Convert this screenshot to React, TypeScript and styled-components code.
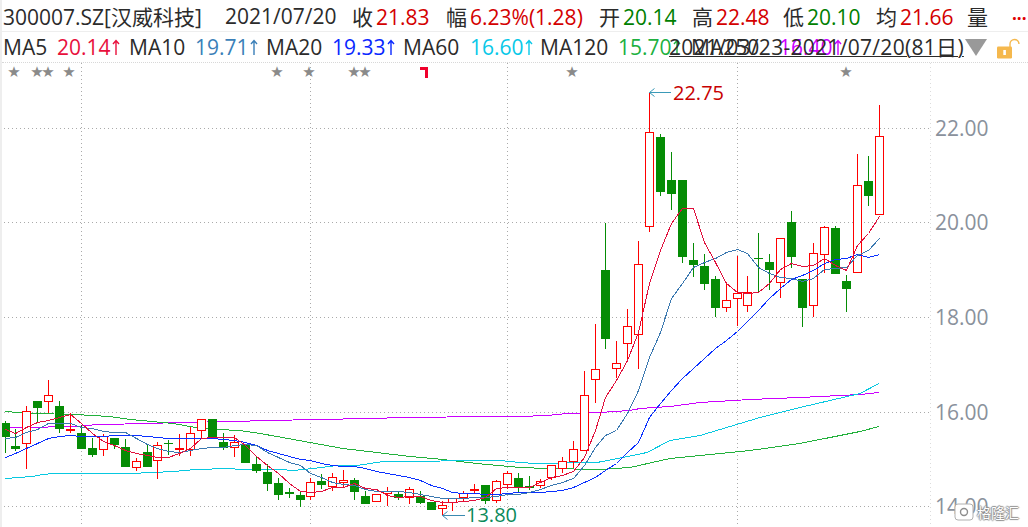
import React from "react";
import styled, { createGlobalStyle } from "styled-components";

const GlobalStyle = createGlobalStyle`
  html, body {
    margin: 0;
    padding: 0;
    background: #fff;
  }
`;

const Page = styled.div`
  position: relative;
  width: 1028px;
  height: 527px;
  overflow: hidden;
  background: #fff;
  font-family: "Open Sans", "Noto Sans CJK SC", sans-serif;
  color: #2b2b2b;
  border-left: 2px solid #eeeeee;
  box-sizing: border-box;
`;

const QuoteRow = styled.div`
  position: relative;
  display: flex;
  align-items: center;
  height: 32px;
  padding-left: 1px;
  border-bottom: 1px solid #eeeeee;
  font-size: 21px;
  white-space: nowrap;
  box-sizing: border-box;
`;

const MaRow = styled.div`
  position: relative;
  display: flex;
  align-items: center;
  height: 31px;
  padding-left: 1px;
  font-size: 21px;
  white-space: nowrap;
  border-bottom: 1px dotted #d8d8d8;
  box-sizing: border-box;
`;

const Cell = styled.span<{ $width: number }>`
  display: inline-block;
  flex: none;
  width: ${(p) => p.$width}px;
`;

const Value = styled.span<{ $color: string }>`
  color: ${(p) => p.$color};
  margin-left: 3px;
`;

const MaValue = styled(Cell)<{ $color: string }>`
  display: inline-flex;
  align-items: center;
  gap: 1px;
  color: ${(p) => p.$color};
`;

const ArrowIcon = styled.svg`
  display: block;
  flex: none;
`;

const RangeLink = styled.span`
  position: absolute;
  left: 667px;
  top: -1px;
  letter-spacing: 0.3px;
  text-decoration: underline;
  text-decoration-thickness: 1px;
`;

const Dots = styled.span`
  position: absolute;
  left: 1010px;
  top: 2px;
  color: #e00000;
  font-size: 17px;
  font-weight: 700;
`;

const SortArrow = styled.span`
  position: absolute;
  left: 963px;
  top: 7px;
  width: 0;
  height: 0;
  border-left: 11px solid transparent;
  border-right: 11px solid transparent;
  border-top: 17px solid #999999;
`;

const LockIcon = styled.svg`
  position: absolute;
  left: 994px;
  top: 6px;
`;

const ChartCanvas = styled.svg`
  display: block;
  width: 1026px;
  height: 464px;
`;

const AxisText = styled.text`
  font-family: "Open Sans", sans-serif;
  font-size: 21px;
  fill: #8a919c;
`;

const StarText = styled.text`
  font-family: "DejaVu Sans", sans-serif;
  font-size: 15px;
  fill: #8a8a8a;
`;

const PeakText = styled.text<{ $color: string }>`
  font-family: "Open Sans", sans-serif;
  font-size: 20px;
  fill: ${(p) => p.$color};
`;

const Watermark = styled.div`
  position: absolute;
  right: 9px;
  bottom: 6px;
  display: flex;
  align-items: center;
  gap: 3px;
  color: #fff;
  font-family: "Noto Sans CJK SC", sans-serif;
  font-size: 14px;
  line-height: 18px;
  text-shadow: 1px 0 1px #8d8d8d, -1px 0 1px #8d8d8d, 0 1px 1px #8d8d8d, 0 -1px 1px #8d8d8d;
`;

const WatermarkLogo = styled.svg`
  display: block;
`;

const RED = "#ff0000";
const GREEN = "#058c05";

const CHART_TOP = 63;

// [bodyTop, bodyBottom, wickTop, wickBottom, up]
const candles: [number, number, number, number, number][] = [
  [423, 437, 421, 453, 0], [446, 449, 429, 451, 0], [411, 444, 406, 469, 1], [401, 408, 401, 422, 0],
  [395, 402, 380, 413, 1], [406, 429, 401, 433, 0], [429, 431, 413, 433, 1], [433, 449, 425, 449, 0],
  [448, 455, 438, 457, 0], [436, 450, 434, 456, 1], [438, 445, 438, 449, 0], [447, 467, 439, 467, 0],
  [461, 468, 458, 471, 1], [452, 467, 445, 467, 0], [445, 461, 442, 479, 1], [443, 444, 440, 455, 0],
  [448, 449, 434, 456, 1], [433, 450, 427, 456, 1], [419, 431, 419, 438, 1], [419, 437, 419, 438, 0],
  [442, 448, 433, 450, 0], [442, 448, 435, 457, 1], [445, 463, 445, 463, 0], [464, 471, 457, 473, 0],
  [472, 484, 464, 491, 0], [483, 495, 478, 500, 0], [492, 494, 488, 498, 0], [495, 500, 492, 507, 0],
  [482, 497, 478, 500, 1], [481, 485, 474, 489, 0], [477, 487, 473, 491, 1], [480, 483, 470, 487, 1],
  [480, 492, 478, 500, 0], [496, 504, 491, 504, 0], [494, 502, 494, 502, 1], [491, 494, 487, 506, 1],
  [494, 498, 492, 500, 0], [489, 498, 487, 504, 1], [496, 503, 491, 504, 0], [502, 510, 502, 510, 0],
  [505, 509, 501, 515, 1], [498, 503, 498, 511, 1], [493, 498, 491, 502, 1], [489, 490, 484, 494, 1],
  [485, 501, 485, 504, 0], [481, 501, 480, 503, 1], [473, 485, 471, 489, 1], [478, 488, 473, 492, 0],
  [486, 488, 476, 490, 0], [481, 486, 479, 488, 1], [465, 478, 465, 480, 1], [461, 469, 457, 473, 1],
  [449, 462, 441, 468, 1], [395, 451, 371, 451, 1], [369, 380, 324, 403, 1], [270, 339, 223, 349, 0],
  [363, 369, 341, 378, 1], [326, 344, 309, 360, 1], [264, 335, 241, 369, 1], [132, 227, 93, 232, 1],
  [137, 192, 134, 196, 0], [180, 194, 152, 210, 0], [180, 257, 180, 263, 0], [260, 265, 243, 277, 0],
  [266, 284, 254, 290, 0], [279, 308, 276, 317, 0], [300, 308, 283, 312, 1], [293, 299, 256, 326, 1],
  [292, 306, 276, 312, 1], [258, 259, 233, 292, 0], [262, 270, 254, 290, 0], [238, 283, 238, 298, 1],
  [222, 257, 211, 268, 0], [279, 308, 279, 327, 0], [253, 306, 243, 317, 1], [227, 255, 226, 273, 1],
  [228, 274, 226, 274, 0], [281, 289, 275, 312, 0], [185, 273, 154, 273, 1], [181, 196, 156, 206, 0],
  [136, 215, 105, 215, 1],
];

const candleX = (i: number) => Math.floor(5.01 + 10.926 * i);

const ma5 = [
  429, 433, 427, 422, 420, 417, 414, 423, 433, 441, 445, 450, 453, 455, 457, 457, 453, 448, 438, 437, 437, 437, 445, 456,
  465, 473, 483, 491, 492, 491, 487, 487, 483, 488, 489, 495, 497, 496, 496, 500, 502, 502, 501, 500, 497, 488, 487, 487,
  487, 482, 477, 475, 471, 457, 430, 397, 380, 360, 332, 283, 250, 223, 208, 208, 242, 262, 283, 292, 293, 292, 283, 269,
  263, 266, 265, 258, 265, 270, 245, 233, 216,
];
const ma10 = [
  438, 437, 432, 429, 423, 423, 423, 427, 428, 431, 432, 432, 438, 444, 448, 451, 452, 450, 448, 447, 447, 445, 444, 445,
  452, 457, 462, 465, 473, 477, 482, 484, 485, 489, 491, 491, 491, 492, 494, 496, 498, 498, 498, 497, 497, 496, 494, 494,
  492, 489, 485, 482, 478, 465, 447, 435, 430, 413, 390, 357, 332, 298, 283, 267, 262, 258, 252, 249, 253, 267, 273, 277,
  278, 281, 278, 269, 268, 267, 255, 250, 238,
];
const ma20 = [
  457, 453, 448, 443, 438, 436, 435, 436, 436, 436, 435, 435, 435, 436, 437, 438, 438, 438, 438, 438, 439, 440, 442, 445,
  450, 453, 456, 459, 460, 463, 465, 466, 466, 468, 471, 473, 475, 477, 480, 485, 488, 492, 493, 493, 494, 494, 493, 492,
  492, 492, 491, 490, 487, 482, 477, 470, 463, 452, 442, 417, 403, 390, 378, 368, 358, 348, 340, 331, 321, 310, 298, 288,
  279, 275, 270, 263, 259, 258, 254, 257, 254,
];

const ma60Pts = "5,478 32,476 43,474 54,473 120,473 131,473 152,472 174,471 196,469 229,468 240,469 260,469 280,469 293,470 313,468 337,465 357,465 383,461 500,460 520,462 535,463 597,462 623,457 647,452 670,440 700,435 760,417 800,407 860,393 879,383";
const ma120Pts = "5,411 32,413 76,414 109,416 131,419 152,421 173,423 196,427 218,429 240,430 260,433 277,436 310,442 343,448 377,452 410,456 443,459 477,463 520,467 547,468 600,469 630,467 670,458 700,455 750,450 800,443 860,431 879,426";
const ma250Pts = "5,427 43,427 54,426 76,426 98,424 152,423 174,422 240,421 260,420 327,419 360,418 415,417 480,416 520,416 547,415 567,413 600,412 630,410 640,408 670,406 700,402 750,399 800,397 860,394 879,392";

const gridY = [128, 222, 317, 412, 506];
const gridX = [81, 310, 507, 737];
const axisLabels = ["22.00", "20.00", "18.00", "16.00", "14.00"];
const starPositions = [14, 37, 48, 69, 277, 309, 354, 365, 572, 846];

// data is in page y, so the svg offset lives here only
const toPoints = (values: number[]) => values.map((y, i) => `${candleX(i) + 0.5},${y - CHART_TOP + 0.5}`).join(" ");
const shiftPoints = (pts: string) =>
  pts
    .split(" ")
    .map((p) => {
      const [x, y] = p.split(",").map(Number);
      return `${x},${y - CHART_TOP + 0.5}`;
    })
    .join(" ");

const Candle = ({ index, data }: { index: number; data: [number, number, number, number, number] }) => {
  const [top, bottom, wickTop, wickBottom, up] = data;
  const x = candleX(index);
  const color = up ? RED : GREEN;
  return (
    <g shapeRendering="crispEdges">
      <line x1={x + 0.5} x2={x + 0.5} y1={wickTop - CHART_TOP} y2={wickBottom - CHART_TOP} stroke={color} />
      {up ? (
        <rect
          x={x - 3.5}
          y={top - CHART_TOP + 0.5}
          width={8}
          height={Math.max(bottom - top - 1, 1)}
          fill="#fff"
          stroke={color}
        />
      ) : (
        <rect x={x - 4} y={top - CHART_TOP} width={9} height={Math.max(bottom - top, 1)} fill={color} />
      )}
    </g>
  );
};

const MaLine = ({ points, color }: { points: string; color: string }) => (
  <polyline points={points} fill="none" stroke={color} strokeWidth={1} shapeRendering="crispEdges" />
);

const Up = () => (
  <ArrowIcon width="8" height="16" viewBox="0 0 8 16">
    <path d="M4 1.5V16M1 5l3-3.5L7 5" fill="none" stroke="currentColor" strokeWidth="1.4" />
  </ArrowIcon>
);

const App = () => {
  return (
    <Page>
      <GlobalStyle />
      <QuoteRow>
        <Cell $width={222}>300007.SZ[汉威科技]</Cell>
        <Cell $width={127}>2021/07/20</Cell>
        <Cell $width={94}>
          收<Value $color="#d40000">21.83</Value>
        </Cell>
        <Cell $width={153}>
          幅<Value $color="#d40000">6.23%(1.28)</Value>
        </Cell>
        <Cell $width={93}>
          开<Value $color="#008000">20.14</Value>
        </Cell>
        <Cell $width={91}>
          高<Value $color="#d40000">22.48</Value>
        </Cell>
        <Cell $width={93}>
          低<Value $color="#008000">20.10</Value>
        </Cell>
        <Cell $width={91}>
          均<Value $color="#d40000">21.66</Value>
        </Cell>
        <Cell $width={24}>量</Cell>
        <Dots>...</Dots>
      </QuoteRow>
      <MaRow>
        <Cell $width={54}>MA5</Cell>
        <MaValue $width={72} $color="#e8103c">20.14<Up /></MaValue>
        <Cell $width={66}>MA10</Cell>
        <MaValue $width={71} $color="#3a7fb8">19.71<Up /></MaValue>
        <Cell $width={66}>MA20</Cell>
        <MaValue $width={71} $color="#0a28ff">19.33<Up /></MaValue>
        <Cell $width={67}>MA60</Cell>
        <MaValue $width={70} $color="#08c8e8">16.60<Up /></MaValue>
        <Cell $width={78}>MA120</Cell>
        <MaValue $width={73} $color="#20b040">15.70<Up /></MaValue>
        <Cell $width={88}>MA250</Cell>
        <MaValue $width={60} $color="#cc00ff">16.40<Up /></MaValue>
        <RangeLink>2021/03/23-2021/07/20(81日)</RangeLink>
        <SortArrow />
        <LockIcon width="24" height="22" viewBox="0 0 24 22">
          <path d="M14 9V6a4.5 4.5 0 0 1 9 0" fill="none" stroke="#f5b84d" strokeWidth="1.4" />
          <rect x="1" y="8.5" width="15" height="12" rx="1.2" fill="#f5b84d" />
          <rect x="7.3" y="12" width="2.6" height="5" fill="#fff" />
        </LockIcon>
      </MaRow>
      <ChartCanvas viewBox="0 0 1026 464">
        <g transform="translate(-2 0)">
          {gridY.map((y) => (
            <line
              key={y}
              x1={0}
              x2={930}
              y1={y - CHART_TOP + 0.5}
              y2={y - CHART_TOP + 0.5}
              stroke="#aaaaaa"
              strokeDasharray="1 3"
            />
          ))}
          {gridX.map((x) => (
            <line key={x} x1={x + 0.5} x2={x + 0.5} y1={0} y2={464} stroke="#aaaaaa" strokeDasharray="1 3" />
          ))}
          <line x1={930.5} x2={930.5} y1={0} y2={464} stroke="#dcdcdc" strokeDasharray="1 3" />

          {starPositions.map((x) => (
            <StarText key={x} x={x} y={14} textAnchor="middle">
              ★
            </StarText>
          ))}
          <path d="M420 4h8v11h-3V7h-5z" fill="#f0002c" />

          <MaLine points={shiftPoints(ma250Pts)} color="#cc00ff" />
          <MaLine points={shiftPoints(ma120Pts)} color="#22b13c" />
          <MaLine points={shiftPoints(ma60Pts)} color="#08c8e0" />

          {candles.map((c, i) => (
            <Candle key={i} index={i} data={c} />
          ))}
          <MaLine points={toPoints(ma20)} color="#0a30ff" />
          <MaLine points={toPoints(ma10)} color="#3a78b0" />
          <MaLine points={toPoints(ma5)} color="#e0103c" />

          <path d="M649.5 29.5H671M649.5 29.5l5-4M649.5 29.5l5 4" fill="none" stroke="#3a9ab8" />
          <PeakText x={673} y={37} $color="#c80000">
            22.75
          </PeakText>
          <path d="M442.5 452.5H465M442.5 452.5l5-4M442.5 452.5l5 4" fill="none" stroke="#3a8ab0" />
          <PeakText x={466} y={459} $color="#0a8a5a">
            13.80
          </PeakText>

          {axisLabels.map((label, i) => (
            <AxisText key={label} x={935} y={gridY[i] - CHART_TOP + 8}>
              {label}
            </AxisText>
          ))}
        </g>
      </ChartCanvas>
      <Watermark>
        <WatermarkLogo width="20" height="18" viewBox="0 0 20 18">
          <path
            d="M1 4a3 3 0 0 1 3-3h12a3 3 0 0 1 3 3v10a3 3 0 0 1-3 3H4a3 3 0 0 1-3-3z"
            fill="#fff"
            stroke="#b0b0b0"
          />
          <circle cx="10" cy="9" r="3.5" fill="none" stroke="#8d8d8d" strokeWidth="1.4" />
        </WatermarkLogo>
        <span>格隆汇</span>
      </Watermark>
    </Page>
  );
};

export default App;
